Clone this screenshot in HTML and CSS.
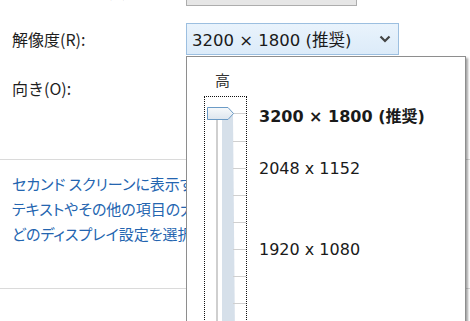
FILE: index.html
```html
<!DOCTYPE html>
<html lang="ja">
<head>
<meta charset="utf-8">
<link rel="stylesheet" href="styles.css">
</head>
<body>
<div class="page">
  <div class="form">
    <div class="label">ディスプレイ(S):</div>
    <div class="box gray"></div>
    <div class="label">解像度(R):</div>
    <div class="box select">
      <span class="value">3200 × 1800 (推奨)</span>
      <svg class="chev" width="12" height="8" viewBox="0 0 12 8"><path d="M1.5 1.5 L6 6 L10.5 1.5" fill="none" stroke="#444" stroke-width="2.2"/></svg>
    </div>
    <div class="label">向き(O):</div>
    <div class="box gray"></div>
  </div>
  <div class="sep sep1"></div>
  <div class="links">
    <a class="link">セカンド スクリーンに表示する画面を選択します</a>
    <a class="link">テキストやその他の項目の大きさを変更します</a>
    <a class="link">どのディスプレイ設定を選択すればよいですか?</a>
  </div>
  <div class="sep sep2"></div>

  <div class="popup">
    <div class="high">高</div>
    <div class="body">
      <div class="slider">
        <svg width="41" height="240" viewBox="0 0 41 240">
          <defs>
            <linearGradient id="tg" x1="0" y1="0" x2="0" y2="1">
              <stop offset="0" stop-color="#f7f9fb"/>
              <stop offset="1" stop-color="#dde6ee"/>
            </linearGradient>
          </defs>
          <rect x="11" y="22" width="2" height="220" fill="#cfcfcf"/>
          <polygon points="17,22 28,18 30,240 17,240" fill="#d6e0ea"/>
          <g stroke="#d0d0d0" stroke-width="1">
            <line x1="28" y1="16.5" x2="41" y2="16.5"/>
            <line x1="28" y1="44.5" x2="41" y2="44.5"/>
            <line x1="28" y1="71.5" x2="41" y2="71.5"/>
            <line x1="28" y1="98.5" x2="41" y2="98.5"/>
            <line x1="28" y1="125.5" x2="41" y2="125.5"/>
            <line x1="28" y1="152.5" x2="41" y2="152.5"/>
            <line x1="28" y1="179.5" x2="41" y2="179.5"/>
            <line x1="28" y1="206.5" x2="41" y2="206.5"/>
          </g>
          <polygon points="2.5,10.5 23,10.5 28.5,16.5 23,22.5 2.5,22.5" fill="url(#tg)" stroke="#6b9bc6" stroke-width="1"/>
        </svg>
      </div>
      <div class="options">
        <div class="opt opt1">3200 × 1800 (推奨)</div>
        <div class="opt opt2">2048 x 1152</div>
        <div class="opt opt3">1920 x 1080</div>
      </div>
    </div>
  </div>
</div>
</body>
</html>
```

FILE: styles.css
```css
html, body {
  margin: 0;
  padding: 0;
  background: #fff;
  overflow: hidden;
}
.page {
  position: relative;
  width: 470px;
  height: 321px;
  overflow: hidden;
  font-family: "DejaVu Sans", "Noto Sans CJK JP", sans-serif;
  color: #222;
}
.form {
  display: grid;
  grid-template-columns: 174px 213px;
  row-gap: 17px;
  padding-left: 12px;
  margin-top: -26px;
}
.label {
  font-size: 16px;
  line-height: 32px;
  height: 32px;
  font-family: "Noto Sans CJK JP", sans-serif;
  color: #1e1e1e;
  white-space: nowrap;
}
.box {
  height: 32px;
  box-sizing: border-box;
}
.gray {
  width: 171px;
  background: #e6e6e6;
  border: 1px solid #adadad;
}
.select {
  width: 213px;
  background: linear-gradient(#e9f3fc, #dcebf9);
  border: 1px solid #9cbfe0;
  display: flex;
  align-items: center;
  justify-content: space-between;
  padding: 0 7px 0 5px;
}
.value {
  font-size: 16.5px;
  color: #1a1a1a;
  white-space: nowrap;
}
.chev {
  display: block;
}
.sep {
  height: 1px;
  background: #dadada;
}
.sep1 {
  margin-top: 55px;
}
.links {
  display: flex;
  flex-direction: column;
  padding-top: 11px;
  margin-left: 12px;
  width: 174px;
  overflow: hidden;
}
.link {
  font-family: "Noto Sans CJK JP", sans-serif;
  font-feature-settings: "palt";
  font-size: 15px;
  line-height: 25px;
  color: #2465b0;
  white-space: nowrap;
}
.sep2 {
  margin-top: 42px;
}
.popup {
  position: absolute;
  left: 186px;
  top: 56px;
  width: 278px;
  height: 300px;
  background: #fff;
  border: 1px solid #8e8e8e;
  box-shadow: 2px 2px 2px rgba(0, 0, 0, 0.35);
}
.high {
  font-family: "Noto Sans CJK JP", sans-serif;
  font-size: 15px;
  line-height: 20px;
  padding: 13px 0 0 28px;
  color: #333;
}
.body {
  display: flex;
  margin-top: 6px;
  padding-left: 17px;
}
.slider {
  width: 41px;
  height: 240px;
  border: 1px dotted #111;
}
.slider svg {
  display: block;
}
.options {
  display: flex;
  flex-direction: column;
  margin-left: 12px;
}
.opt {
  font-size: 16px;
  line-height: 20px;
  color: #1a1a1a;
  white-space: nowrap;
}
.opt1 {
  font-weight: bold;
  margin-top: 11px;
}
.opt2 {
  margin-top: 32px;
}
.opt3 {
  margin-top: 61px;
}
```
